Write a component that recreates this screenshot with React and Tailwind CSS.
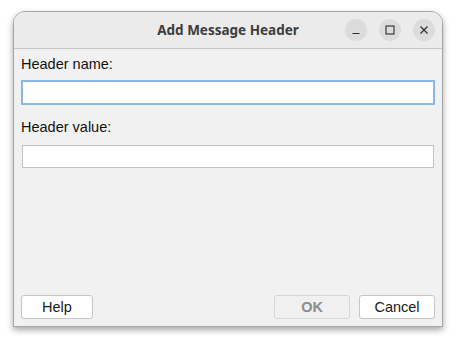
import React from 'react';

const TitleButton = ({ children }) => (
  <div className="flex h-[22px] w-[22px] items-center justify-center rounded-full bg-[#dcdcdc]">
    {children}
  </div>
);

const DialogButton = ({ children, disabled, className = '' }) => (
  <button
    className={
      'h-[24px] rounded-[3px] border text-[14.5px] leading-none ' +
      (disabled
        ? 'border-[#d6d6d6] bg-[#f0f0f0] font-bold text-[#8c8c8c] '
        : 'border-[#c6c6c6] bg-white text-[#1a1a1a] ') +
      className
    }
  >
    {children}
  </button>
);

export default function App() {
  return (
    <div className="h-[344px] w-[456px] bg-white pl-[13px] pt-[11px]" style={{ fontFamily: '"Liberation Sans", Arial, sans-serif' }}>
      <div className="flex h-[316px] w-[430px] flex-col overflow-hidden rounded-t-[12px] border border-[#a6a6a6] bg-[#f1f1f1] shadow-[0_3px_6px_rgba(0,0,0,0.35)]">
        {/* title bar */}
        <div className="relative flex h-[37px] shrink-0 items-center justify-center border-b border-[#c4c4c4] bg-[#ebebeb]">
          <span className="text-[13.5px] font-bold text-[#3d3d3d]" style={{ fontFamily: '"Noto Sans", "DejaVu Sans", sans-serif' }}>
            Add Message Header
          </span>
          <div className="absolute right-[7px] top-[7px] flex gap-[12px]">
            <TitleButton>
              <svg width="10" height="10" viewBox="0 0 10 10">
                <path d="M1.5 8.5h7" stroke="#2e2e2e" strokeWidth="1.2" />
              </svg>
            </TitleButton>
            <TitleButton>
              <svg width="10" height="10" viewBox="0 0 10 10">
                <rect x="1" y="1" width="8" height="8" fill="none" stroke="#2e2e2e" strokeWidth="1.1" />
              </svg>
            </TitleButton>
            <TitleButton>
              <svg width="10" height="10" viewBox="0 0 10 10">
                <path d="M1.5 1.5l7 7M8.5 1.5l-7 7" stroke="#2e2e2e" strokeWidth="1.2" />
              </svg>
            </TitleButton>
          </div>
        </div>

        {/* body */}
        <div className="flex flex-1 flex-col px-[7px] pb-[7px] pt-[7px]">
          <label className="text-[14.5px] leading-[17px] text-[#111]">Header name:</label>
          <div className="mt-[8px] px-[1px]">
            <input className="block h-[23px] w-full border border-[#8ab8e6] bg-white outline-none ring-1 ring-[#8ab8e6]" />
          </div>
          <label className="mt-[15px] text-[14.5px] leading-[17px] text-[#111]">Header value:</label>
          <div className="mt-[9px] px-[1px]">
            <input className="block h-[23px] w-full border border-[#c2c2c2] bg-white outline-none" />
          </div>
          <div className="flex-1" />
          <div className="flex items-center">
            <DialogButton className="w-[72px]">Help</DialogButton>
            <div className="flex-1" />
            <DialogButton disabled className="w-[76px]">OK</DialogButton>
            <DialogButton className="ml-[9px] w-[76px]">Cancel</DialogButton>
          </div>
        </div>
      </div>
    </div>
  );
}
